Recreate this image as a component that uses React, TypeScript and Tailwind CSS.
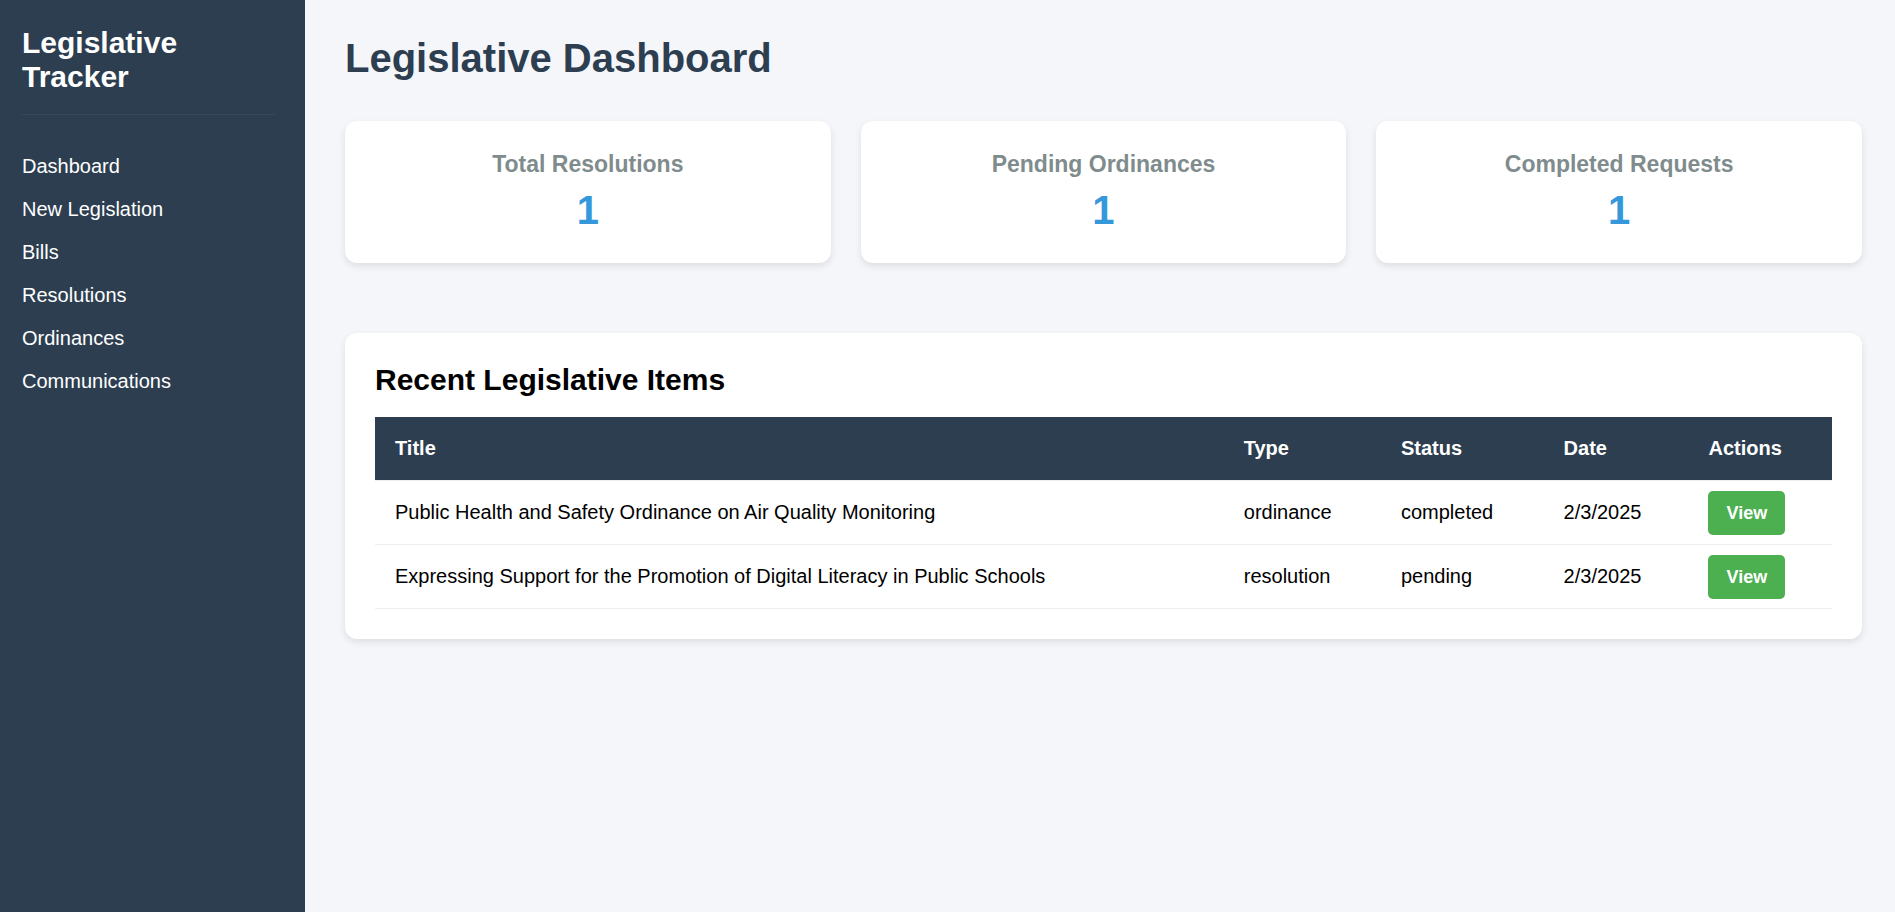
const navItems = [
  "Dashboard",
  "New Legislation",
  "Bills",
  "Resolutions",
  "Ordinances",
  "Communications",
];

const stats = [
  { label: "Total Resolutions", value: 1 },
  { label: "Pending Ordinances", value: 1 },
  { label: "Completed Requests", value: 1 },
];

const columns = ["Title", "Type", "Status", "Date", "Actions"];

const items = [
  {
    title: "Public Health and Safety Ordinance on Air Quality Monitoring",
    type: "ordinance",
    status: "completed",
    date: "2/3/2025",
  },
  {
    title: "Expressing Support for the Promotion of Digital Literacy in Public Schools",
    type: "resolution",
    status: "pending",
    date: "2/3/2025",
  },
];

function Sidebar() {
  return (
    <aside className="w-[305px] shrink-0 bg-[#2c3e50] pt-[26px] pr-[30px] pl-[22px] text-white">
      <h2 className="border-b border-[#34495e] pb-5 text-[30px] leading-[34px] font-bold">
        Legislative Tracker
      </h2>
      <nav className="mt-10">
        <ul className="flex flex-col gap-5">
          {navItems.map((item) => (
            <li key={item} className="leading-[23px]">
              <a href="#">{item}</a>
            </li>
          ))}
        </ul>
      </nav>
    </aside>
  );
}

function StatCard({ label, value }: { label: string; value: number }) {
  return (
    <div className="rounded-[12px] bg-white p-[30px] text-center shadow-[0_3px_7px_rgba(0,0,0,0.1)]">
      <h3 className="mb-[10px] text-[23px] leading-[27px] font-bold text-[#7f8c8d]">{label}</h3>
      <p className="text-[40px] leading-[45px] font-bold text-[#3498db]">{value}</p>
    </div>
  );
}

function ItemsTable() {
  return (
    <table className="w-full border-collapse text-left">
      <thead>
        <tr className="border-b border-[#ecf0f1]">
          {columns.map((column) => (
            <th key={column} scope="col" className="bg-[#2c3e50] p-5 font-bold text-white">
              {column}
            </th>
          ))}
        </tr>
      </thead>
      <tbody>
        {items.map((item) => (
          <tr key={item.title} className="border-b border-[#ecf0f1]">
            <td className="p-5">{item.title}</td>
            <td className="p-5">{item.type}</td>
            <td className="p-5">{item.status}</td>
            <td className="p-5">{item.date}</td>
            <td className="p-5">
              <a
                href="#"
                className="rounded-[5px] bg-[#4caf50] px-[18px] py-3 text-[18px] leading-[20px] font-bold text-white"
              >
                View
              </a>
            </td>
          </tr>
        ))}
      </tbody>
    </table>
  );
}

export default function App() {
  return (
    <div className="flex min-h-screen bg-[#f5f6fa] font-['Liberation_Sans',Arial,sans-serif] text-[20px] leading-[23px] text-black">
      <Sidebar />
      <main className="min-w-0 flex-1 pt-[36px] pr-[33px] pb-10 pl-10">
        <h1 className="mb-10 text-[40px] leading-[45px] font-bold text-[#2c3e50]">
          Legislative Dashboard
        </h1>
        <div className="mb-[70px] grid grid-cols-3 gap-[30px]">
          {stats.map((stat) => (
            <StatCard key={stat.label} label={stat.label} value={stat.value} />
          ))}
        </div>
        <section className="rounded-[12px] bg-white p-[30px] shadow-[0_3px_7px_rgba(0,0,0,0.1)]">
          <h2 className="mb-5 text-[30px] leading-[34px] font-bold">Recent Legislative Items</h2>
          <ItemsTable />
        </section>
      </main>
    </div>
  );
}
